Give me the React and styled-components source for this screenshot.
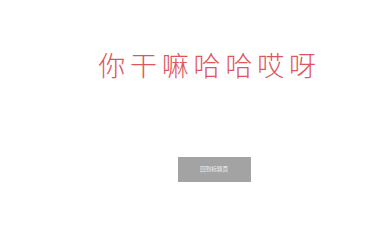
import React from "react";
import styled, { createGlobalStyle } from "styled-components";

const Global = createGlobalStyle`
  html, body { margin: 0; padding: 0; background: #ffffff; }
  body { font-family: "Noto Sans CJK SC", "Noto Sans", sans-serif; }
`;

const Page = styled.div`
  width: 381px;
  height: 226px;
  box-sizing: border-box;
  padding: 47px 0 0 38px;
  display: flex;
  flex-direction: column;
  align-items: center;
  background: #ffffff;
`;

const Title = styled.h1`
  margin: 0;
  font-family: "Noto Sans CJK SC", sans-serif;
  font-weight: 300;
  font-size: 27px;
  line-height: 36px;
  letter-spacing: 4.8px;
  color: #de555b;
  white-space: nowrap;
`;

const BackButton = styled.button`
  margin: 74px 0 0 9px;
  width: 73px;
  height: 25px;
  border: none;
  padding: 0;
  background: #a3a3a3;
  color: #f4f4f4;
  font-family: "Noto Sans CJK SC", sans-serif;
  font-size: 5.6px;
  line-height: 25px;
  text-align: center;
  cursor: pointer;
`;

export default function App() {
  return (
    <>
      <Global />
      <Page>
        <Title>你干嘛哈哈哎呀</Title>
        <BackButton>回到标题页</BackButton>
      </Page>
    </>
  );
}
